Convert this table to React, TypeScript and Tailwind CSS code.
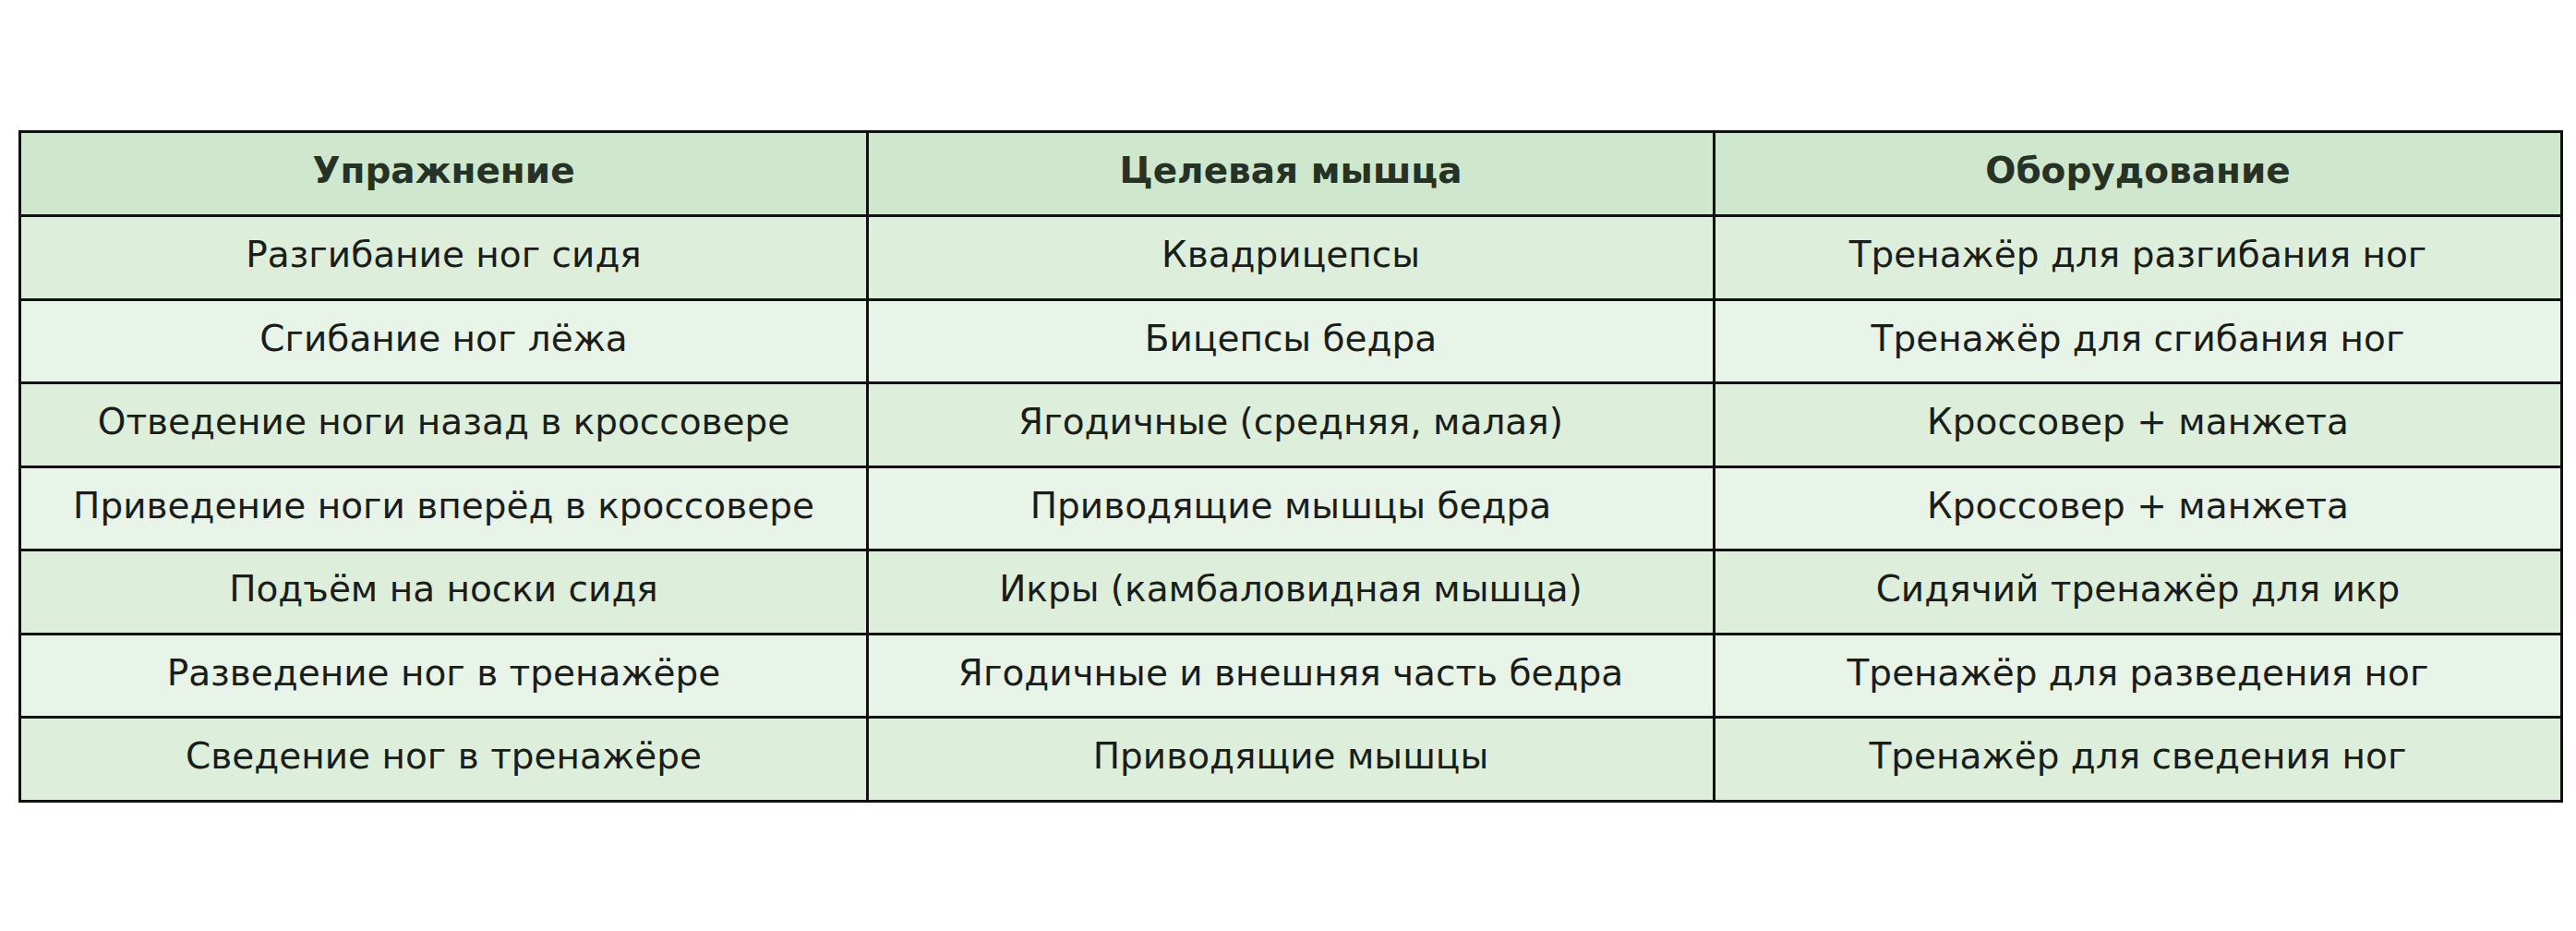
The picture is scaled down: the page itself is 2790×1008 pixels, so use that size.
import React from "react";

const rows: [string, string, string][] = [
  ["Разгибание ног сидя", "Квадрицепсы", "Тренажёр для разгибания ног"],
  ["Сгибание ног лёжа", "Бицепсы бедра", "Тренажёр для сгибания ног"],
  ["Отведение ноги назад в кроссовере", "Ягодичные (средняя, малая)", "Кроссовер + манжета"],
  ["Приведение ноги вперёд в кроссовере", "Приводящие мышцы бедра", "Кроссовер + манжета"],
  ["Подъём на носки сидя", "Икры (камбаловидная мышца)", "Сидячий тренажёр для икр"],
  ["Разведение ног в тренажёре", "Ягодичные и внешняя часть бедра", "Тренажёр для разведения ног"],
  ["Сведение ног в тренажёре", "Приводящие мышцы", "Тренажёр для сведения ног"],
];

export default function App() {
  return (
    <div className="w-[2790px] h-[1008px] bg-white pl-[20px] pt-[141px]" style={{ fontFamily: '"DejaVu Sans", sans-serif' }}>
      <table className="w-[2753px] table-fixed border-collapse border-[3px] border-[#111]">
        <colgroup>
          <col className="w-[918px]" />
          <col className="w-[917px]" />
          <col className="w-[918px]" />
        </colgroup>
        <thead>
          <tr className="h-[91px] bg-[#cfe7cc]">
            <th className="border-[3px] border-[#111] pb-[5px] text-[39px] font-bold text-[#263226] text-center align-middle">Упражнение</th>
            <th className="border-[3px] border-[#111] pb-[5px] text-[39px] font-bold text-[#263226] text-center align-middle">Целевая мышца</th>
            <th className="border-[3px] border-[#111] pb-[5px] text-[39px] font-bold text-[#263226] text-center align-middle">Оборудование</th>
          </tr>
        </thead>
        <tbody>
          {rows.map((r, i) => (
            <tr key={i} className={i % 2 === 0 ? "h-[90.5px] bg-[#ddefdb]" : "h-[90.5px] bg-[#e9f4e8]"}>
              {r.map((c, j) => (
                <td key={j} className="border-[3px] border-[#111] pb-[6px] text-[39px] text-[#1a1d1a] text-center align-middle leading-none">
                  {c}
                </td>
              ))}
            </tr>
          ))}
        </tbody>
      </table>
    </div>
  );
}
